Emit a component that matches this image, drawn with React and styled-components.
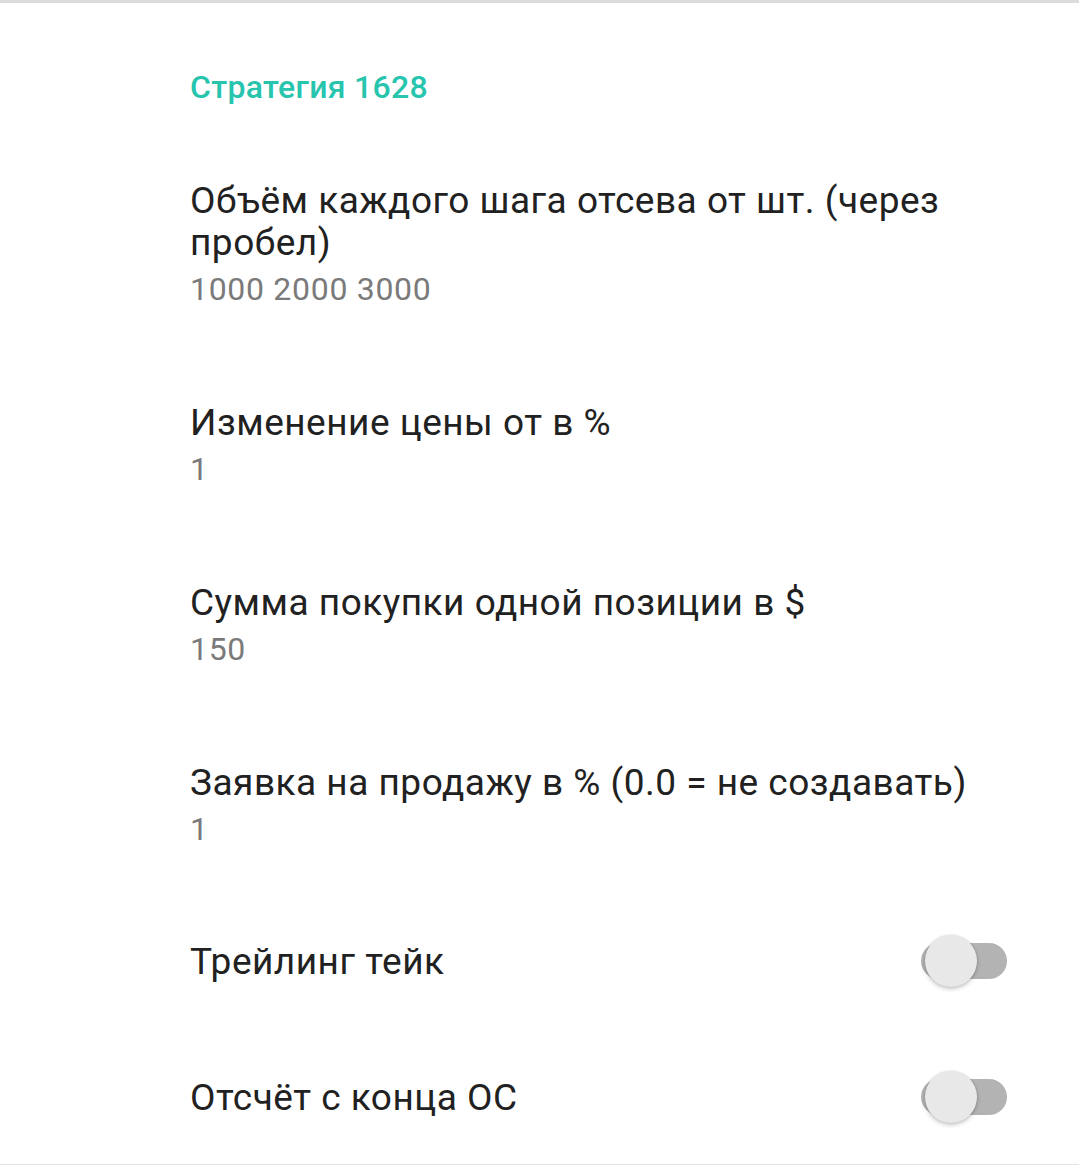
import React, { useState } from "react";
import styled, { createGlobalStyle } from "styled-components";

const GlobalStyle = createGlobalStyle`
  html, body {
    margin: 0;
    padding: 0;
    background: #ffffff;
  }
  body {
    font-family: Roboto, "Noto Sans", "Liberation Sans", sans-serif;
    -webkit-font-smoothing: antialiased;
  }
`;

const Screen = styled.div`
  width: 1079px;
  height: 1165px;
  box-sizing: border-box;
  background: #ffffff;
  border-top: 3px solid #dcdcdc;
  border-bottom: 1px solid #e2e2e2;
  overflow: hidden;
  display: flex;
  flex-direction: column;
`;

const TopLine = styled.div`
  height: 1px;
  margin-top: 2px;
  background: #f3f3f3;
`;

const List = styled.div`
  display: flex;
  flex-direction: column;
  padding: 0 72px 0 190px;
`;

const CategoryTitle = styled.div`
  margin: 62px 0 29px;
  font-size: 32px;
  line-height: 40px;
  font-weight: 500;
  letter-spacing: 0.3px;
  color: #27c4ae;
`;

const Item = styled.div`
  display: flex;
  flex-direction: column;
  padding: 44px 0;
`;

const Title = styled.div`
  font-size: 37px;
  line-height: 42px;
  letter-spacing: 0.5px;
  color: #212121;
  padding-right: 10px;
`;

const Summary = styled.div`
  font-size: 32px;
  line-height: 50px;
  letter-spacing: 0.7px;
  color: #7a7a7a;
`;

const ToggleRow = styled.div`
  height: 136px;
  display: flex;
  align-items: center;
  justify-content: space-between;
  margin-top: ${(p) => (p.$first ? "-4px" : "0")};
`;

const Track = styled.button`
  position: relative;
  flex-shrink: 0;
  width: 86px;
  height: 36px;
  border: none;
  padding: 0;
  border-radius: 18px;
  background: ${(p) => (p.$on ? "#9ee6db" : "#b3b3b3")};
  cursor: pointer;
  margin-top: -3px;
`;

const Thumb = styled.span`
  position: absolute;
  top: -8px;
  left: ${(p) => (p.$on ? "34px" : "4px")};
  width: 52px;
  height: 52px;
  border-radius: 50%;
  background: ${(p) => (p.$on ? "#27c4ae" : "#e8e8e8")};
  box-shadow: 0 2px 4px rgba(0, 0, 0, 0.22), 0 0 2px rgba(0, 0, 0, 0.12);
  transition: left 0.15s;
`;

function Switch({ on, onToggle }) {
  return (
    <Track $on={on} onClick={onToggle}>
      <Thumb $on={on} />
    </Track>
  );
}

const prefs = [
  { title: "Объём каждого шага отсева от шт. (через пробел)", value: "1000 2000 3000" },
  { title: "Изменение цены от в %", value: "1" },
  { title: "Сумма покупки одной позиции в $", value: "150" },
  { title: "Заявка на продажу в % (0.0 = не создавать)", value: "1" },
];

export default function App() {
  const [toggles, setToggles] = useState({ trailing: false, fromEnd: false });
  const flip = (k) => setToggles((t) => ({ ...t, [k]: !t[k] }));

  return (
    <>
      <GlobalStyle />
      <Screen>
        <TopLine />
        <List>
          <CategoryTitle>Стратегия 1628</CategoryTitle>
          {prefs.map((p) => (
            <Item key={p.title}>
              <Title>{p.title}</Title>
              <Summary>{p.value}</Summary>
            </Item>
          ))}
          <ToggleRow $first>
            <Title>Трейлинг тейк</Title>
            <Switch on={toggles.trailing} onToggle={() => flip("trailing")} />
          </ToggleRow>
          <ToggleRow>
            <Title>Отсчёт с конца ОС</Title>
            <Switch on={toggles.fromEnd} onToggle={() => flip("fromEnd")} />
          </ToggleRow>
        </List>
      </Screen>
    </>
  );
}
